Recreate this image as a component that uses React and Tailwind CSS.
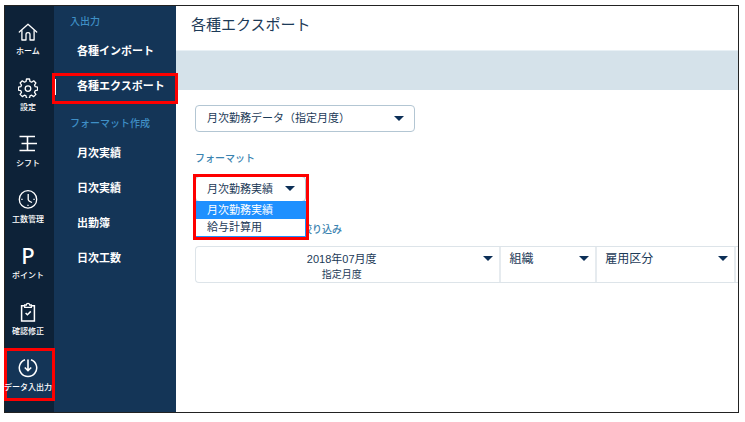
/**
 * App.jsx  —  各種エクスポート画面
 *
 * Layout:
 *  - Rail     : アイコン付きメインメニュー
 *  - SubMenu  : 入出力 / フォーマット作成
 *  - Main     : 出力データの選択と絞り込み
 */
import React from 'react';

// ─── Icons ───────────────────────────────────────────────────────────────────
const Icon = ({ children }) => (
    <svg
        viewBox="0 0 20 20"
        className="size-5"
        fill="none"
        stroke="currentColor"
        strokeWidth="1.3"
        aria-hidden="true"
    >
        {children}
    </svg>
);

const HomeIcon = () => (
    <Icon>
        <path d="M1.3 10 10 2.2 18.7 10" strokeLinecap="round" strokeLinejoin="round" />
        <path d="M3.9 8.2V18H8V12.4Q8 10.6 10 10.6T12 12.4V18H16.1V8.2" strokeLinejoin="round" />
    </Icon>
);

const GearIcon = () => (
    <Icon>
        <path
            strokeLinejoin="round"
            d="M8.5 1h3l.5 2.5 1.6.7 2.1-1.4 2.2 2.2-1.4 2.1.7 1.6 2.4.5v3l-2.4.5-.7 1.6 1.4 2.1-2.2 2.2-2.1-1.4-1.6.7-.5 2.4h-3l-.5-2.4-1.6-.7-2.1 1.4-2.2-2.2 1.4-2.1-.7-1.6-2.4-.5v-3l2.4-.5.7-1.6-1.4-2.1 2.2-2.2 2.1 1.4 1.6-.7z"
        />
        <circle cx="10" cy="10.6" r="2.8" />
    </Icon>
);

const ShiftIcon = () => (
    <Icon>
        <path d="M1.5 2.5H17M3.5 9.5H19M1.5 16.5H17M9.5 2.5V16.5" strokeWidth="1.6" />
    </Icon>
);

const ClockIcon = () => (
    <Icon>
        <circle cx="10" cy="9.4" r="8.7" />
        <path d="M10.2 4V9.5Q10.4 11.3 14 12.5" />
        <path d="M3.3 9.4H4.6M15.4 9.4H16.7M10 14.8V16.1" />
    </Icon>
);

const PointIcon = () => (
    <span className="h-5 font-['Noto_Sans',sans-serif] text-[22px] leading-[18px] font-medium">P</span>
);

const ClipboardIcon = () => (
    <Icon>
        <path d="M6.7 3.7H3.6V19H16.4V3.7H13.3" strokeWidth="1.5" />
        <path d="M6.7 5.4V3H8.3Q8.5 1.3 10 1.3T11.7 3H13.3V5.4Z" />
        <path d="M7.6 11 9.4 12.8 12.8 9.4" strokeWidth="1.5" />
    </Icon>
);

const DataIcon = () => (
    <Icon>
        <path d="M7 1.7A8.7 8.7 0 1 0 13 1.7" strokeWidth="1.5" />
        <path d="M10 1.5V12.5M6.8 9.5 10 12.7 13.2 9.5" strokeWidth="1.6" />
    </Icon>
);

const Caret = ({ className = '' }) => (
    <svg viewBox="0 0 10 5" className={`h-[5px] w-2.5 shrink-0 fill-[#0c2f57] ${className}`} aria-hidden="true">
        <path d="M0 0H10L5 5Z" />
    </svg>
);

// ─── Data ────────────────────────────────────────────────────────────────────
const railItems = [
    { label: 'ホーム', icon: HomeIcon },
    { label: '設定', icon: GearIcon },
    { label: 'シフト', icon: ShiftIcon },
    { label: '工数管理', icon: ClockIcon },
    { label: 'ポイント', icon: PointIcon },
    { label: '確認修正', icon: ClipboardIcon },
    { label: 'データ入出力', icon: DataIcon, active: true },
];

const menuGroups = [
    { title: '入出力', items: ['各種インポート', '各種エクスポート'] },
    { title: 'フォーマット作成', items: ['月次実績', '日次実績', '出勤簿', '日次工数'] },
];

const formats = ['月次勤務実績', '給与計算用'];

// 赤い強調枠
const Highlight = ({ className }) => (
    <span className={`pointer-events-none absolute border-3 border-[#fe0000] ${className}`} />
);

// ─── Rail ────────────────────────────────────────────────────────────────────
const Rail = () => (
    <nav className="w-[49px] shrink-0 bg-[#0d2238] pt-1.5 pb-2 text-white">
        {railItems.map(({ label, icon: Glyph, active }) => (
            <a
                key={label}
                href="#"
                className={`relative mb-[3px] flex h-[53px] flex-col items-center gap-1 pt-2.5 pr-[3px] ${active ? 'bg-[#143557]' : ''}`}
            >
                {active && <Highlight className="-inset-x-px inset-y-0" />}
                <Glyph />
                <span className="relative text-[8px] leading-3 font-medium whitespace-nowrap">{label}</span>
            </a>
        ))}
    </nav>
);

// ─── Sub menu ────────────────────────────────────────────────────────────────
const SubMenu = ({ current }) => (
    <nav className="w-[122px] shrink-0 bg-[#143557]">
        {menuGroups.map((group, i) => (
            <section key={group.title}>
                <h2
                    className={`pl-4 text-[10px] leading-4 font-medium text-[#3f8fc6] ${i === 0 ? 'pt-2 pb-1' : 'pt-3 pb-1'}`}
                >
                    {group.title}
                </h2>
                {group.items.map((item) => (
                    <a
                        key={item}
                        href="#"
                        className="relative flex h-[35px] items-center pl-px text-[11px] font-bold whitespace-nowrap text-white"
                    >
                        <span className={`mr-[21px] h-4 w-px ${item === current ? 'bg-white' : ''}`} />
                        {item}
                        {item === current && <Highlight className="-inset-x-0.5 top-1 bottom-0" />}
                    </a>
                ))}
            </section>
        ))}
    </nav>
);

// ─── Filter cell ─────────────────────────────────────────────────────────────
const FilterCell = ({ label, note }) => (
    <button type="button" className="flex items-start border-r-2 border-[#e6ebef] pt-[3px] pr-1.5 pl-2 text-left">
        {note ? (
            <span className="flex-1 pr-1 text-center">
                <span className="block text-[11px] leading-[18px]">{label}</span>
                <span className="block text-[10px] leading-[14px]">{note}</span>
            </span>
        ) : (
            <span className="flex-1 text-[12px] leading-[18px]">{label}</span>
        )}
        <Caret className="mt-1.5" />
    </button>
);

// ─── Main ────────────────────────────────────────────────────────────────────
const Main = () => (
    <main className="min-w-0 flex-1 bg-white">
        <h1 className="px-[15px] pt-[7px] pb-[13px] text-[15px] leading-6">各種エクスポート</h1>
        <div className="h-10 border-t border-[#e8f0f5] bg-[#d5e2ea]" />

        <div className="pt-[15px] pl-[19px]">
            <div className="relative w-[220px]">
                <select
                    aria-label="出力データ"
                    className="h-[27px] w-full appearance-none rounded-sm border border-[#b3c6d3] bg-white pl-[11px] text-[11px] outline-none"
                >
                    <option>月次勤務データ（指定月度）</option>
                </select>
                <Caret className="pointer-events-none absolute top-[11px] right-[11px]" />
            </div>

            <label htmlFor="format" className="mt-[19px] block text-[10px] leading-4 font-medium text-[#3a83b0]">
                フォーマット
            </label>
            <div className="relative mt-[9px] w-[111px]">
                <select
                    id="format"
                    className="h-[26px] w-full appearance-none rounded-sm border border-[#b3c6d3] bg-white pl-[11px] text-[11px] outline-none"
                >
                    {formats.map((name) => (
                        <option key={name}>{name}</option>
                    ))}
                </select>
                <Caret className="pointer-events-none absolute top-[10px] right-[11px]" />
                <ul
                    role="listbox"
                    aria-label="フォーマット"
                    className="absolute inset-x-0 top-[25px] border border-[#1e90ff] bg-white text-[11px] leading-[17px]"
                >
                    {formats.map((name, i) => (
                        <li
                            key={name}
                            role="option"
                            aria-selected={i === 0}
                            className={`pl-[11px] ${i === 0 ? 'bg-[#1e90ff] text-white' : ''}`}
                        >
                            {name}
                        </li>
                    ))}
                </ul>
                <Highlight className="-top-0.5 -right-[3px] -bottom-[38px] -left-0.5" />
            </div>

            <h2 className="mt-5 pl-[107px] text-[10px] leading-4 font-medium text-[#3a83b0]">絞り込み</h2>
            <div className="mt-2 grid h-[37px] grid-cols-[306fr_96fr_139fr_2px] rounded-l-sm border-y border-l border-[#dde4e9]">
                <FilterCell label="2018年07月度" note="指定月度" />
                <FilterCell label="組織" />
                <FilterCell label="雇用区分" />
            </div>
        </div>
    </main>
);

// ─── App ─────────────────────────────────────────────────────────────────────
const App = () => (
    <div className="bg-white pt-[5px] pr-1.5 pb-2 pl-1 font-['Liberation_Sans','Noto_Sans_CJK_JP',sans-serif] text-[#1c3a57]">
        <div className="flex border border-[#222222]">
            <Rail />
            <SubMenu current="各種エクスポート" />
            <Main />
        </div>
    </div>
);

export default App;
